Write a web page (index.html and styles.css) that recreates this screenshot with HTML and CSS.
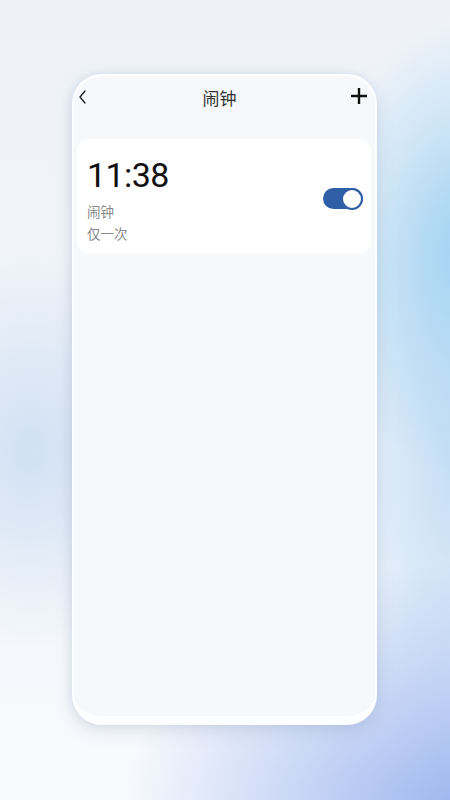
FILE: index.html
```html
<!DOCTYPE html>
<html lang="zh-CN">
<head>
<meta charset="utf-8">
<title>闹钟</title>
<link rel="stylesheet" href="styles.css">
</head>
<body>
<div class="page">
  <div class="phone">
    <div class="header">
      <svg class="back" width="10" height="16" viewBox="0 0 10 16"><path d="M7 2 L2 8 L7 14" fill="none" stroke="#222" stroke-width="1.4" stroke-linecap="round" stroke-linejoin="round"/></svg>
      <div class="title">闹钟</div>
      <svg class="add" width="16" height="16" viewBox="0 0 16 16"><path d="M8 1 V15 M1 8 H15" stroke="#111" stroke-width="2.4" stroke-linecap="square"/></svg>
    </div>
    <div class="card">
      <div class="info">
        <div class="time">11:38</div>
        <div class="label">闹钟</div>
        <div class="label">仅一次</div>
      </div>
      <div class="toggle"><div class="knob"></div></div>
    </div>
  </div>
</div>
</body>
</html>
```
FILE: styles.css
```css
html, body {
  margin: 0;
  padding: 0;
}
body {
  width: 450px;
  height: 800px;
  overflow: hidden;
  font-family: "Noto Sans CJK SC", "Noto Sans", sans-serif;
  background:
    radial-gradient(ellipse 150px 230px at 470px 250px, rgba(160, 210, 242, 1), rgba(160, 210, 242, 0) 100%),
    radial-gradient(ellipse 360px 260px at 480px 820px, rgba(150, 176, 238, 1), rgba(150, 176, 238, 0) 100%),
    radial-gradient(ellipse 130px 330px at 460px 460px, rgba(190, 218, 244, 0.9), rgba(190, 218, 244, 0) 100%),
    radial-gradient(ellipse 140px 200px at 30px 450px, rgba(205, 222, 242, 0.9), rgba(205, 222, 242, 0) 100%),
    linear-gradient(180deg, #eef2f8 0%, #f1f5fa 50%, #f8fafd 100%);
}
.page {
  padding: 74px 0 0 72px;
}
.phone {
  box-sizing: border-box;
  width: 305px;
  height: 651px;
  border-radius: 30px;
  background: #f6f8fb;
  border: 2px solid #fdfeff;
  border-bottom-width: 9px;
  box-shadow: 0 6px 18px rgba(110, 130, 160, 0.18), -2px 0 8px rgba(120, 140, 170, 0.12);
  display: flex;
  flex-direction: column;
  overflow: hidden;
}
.header {
  height: 44px;
  display: flex;
  align-items: center;
  justify-content: space-between;
  padding: 0 8px 0 4px;
  flex-shrink: 0;
}
.back {
  display: block;
  margin-top: -2px;
}
.title {
  font-size: 17px;
  color: #333;
  line-height: 20px;
}
.add {
  display: block;
  margin-top: -4px;
}
.card {
  margin: 19px 4px 0 3px;
  background: #ffffff;
  border-radius: 12px;
  padding: 16px 8px 10px 10px;
  display: flex;
  align-items: center;
  justify-content: space-between;
}
.time {
  font-family: Roboto, "Noto Sans", sans-serif;
  font-size: 34px;
  line-height: 40px;
  color: #111;
  letter-spacing: -0.6px;
  margin-bottom: 5px;
}
.label {
  font-size: 13.5px;
  line-height: 22px;
  color: #888;
}
.toggle {
  width: 40px;
  height: 21px;
  border-radius: 11px;
  background: #2f5fa7;
  display: flex;
  align-items: center;
  justify-content: flex-end;
  margin-top: -2px;
}
.knob {
  box-sizing: border-box;
  width: 22px;
  height: 22px;
  border-radius: 50%;
  background: #fff;
  border: 2px solid #2f5fa7;
}
```
